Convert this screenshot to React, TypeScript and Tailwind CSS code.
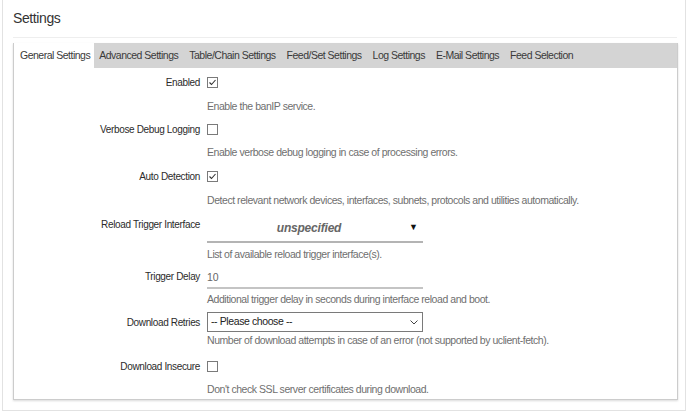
const tabs = [
  'General Settings',
  'Advanced Settings',
  'Table/Chain Settings',
  'Feed/Set Settings',
  'Log Settings',
  'E-Mail Settings',
  'Feed Selection',
]

function Checkbox({ checked }: { checked?: boolean }) {
  return (
    <svg width="11" height="11" viewBox="0 0 11 11" className="block">
      <rect x="0.5" y="0.5" width="10" height="10" fill="#fff" stroke="#7a7a7a" />
      {checked && (
        <polyline points="2.5,5.5 4.5,7.5 8.5,3" fill="none" stroke="#333" strokeWidth="1.1" />
      )}
    </svg>
  )
}

function Label({ children, className = '' }: { children: React.ReactNode; className?: string }) {
  return (
    <div className={`w-[186px] shrink-0 text-right text-[10px] tracking-[-0.35px] text-[#2b2b2b] ${className}`}>
      {children}
    </div>
  )
}

function Desc({ children, className = '' }: { children: React.ReactNode; className?: string }) {
  return (
    <div
      className={`ml-[193px] h-[14px] leading-[14px] text-[10.5px] tracking-[-0.45px] text-[#6f6f6f] ${className}`}
    >
      {children}
    </div>
  )
}

export default function App() {
  return (
    <div className="w-[690px] h-[413px] bg-white overflow-hidden font-['Liberation_Sans',Arial,sans-serif]">
      <div className="ml-[2px] w-[684px] h-[411px] border-x border-b border-[#e2e2e2] pl-[10px]">
        <div className="h-[37px] flex items-center text-[14px] tracking-[-0.4px] text-[#333]">Settings</div>
        <div className="w-[664px] h-px bg-[#eeeeee]" />
        <div className="mt-[5px] w-[665px] border-x border-b border-[#cccccc] shadow-[0_1px_2px_rgba(0,0,0,0.15)]">
          <div className="flex h-[25px] bg-[#d4d4d4] text-[10.5px] tracking-[-0.5px] text-[#3a3a3a]">
            {tabs.map((t, i) => (
              <div
                key={t}
                className={
                  i === 0
                    ? 'flex items-center bg-white pl-[6px] pr-[4px]'
                    : 'flex items-center pl-[5px] pr-[6px]'
                }
              >
                {t}
              </div>
            ))}
          </div>

          <div className="pt-[4px] pb-[3px]">
            {/* Enabled */}
            <div className="flex h-[20px] items-center">
              <Label>Enabled</Label>
              <div className="ml-[7px]"><Checkbox checked /></div>
            </div>
            <Desc className="mt-[7px]">Enable the banIP service.</Desc>

            {/* Verbose */}
            <div className="mt-[6px] flex h-[20px] items-center">
              <Label>Verbose Debug Logging</Label>
              <div className="ml-[7px]"><Checkbox /></div>
            </div>
            <Desc className="mt-[6px]">Enable verbose debug logging in case of processing errors.</Desc>

            {/* Auto detection */}
            <div className="mt-[7px] flex h-[20px] items-center">
              <Label>Auto Detection</Label>
              <div className="ml-[7px]"><Checkbox checked /></div>
            </div>
            <Desc className="mt-[7px]">
              Detect relevant network devices, interfaces, subnets, protocols and utilities automatically.
            </Desc>

            {/* Reload trigger */}
            <div className="mt-[5px] flex">
              <Label className="pt-[3px] leading-[20px]">Reload Trigger Interface</Label>
              <div className="ml-[7px] flex h-[31px] w-[216px] items-center border-b-2 border-[#b4b4b4] pt-[3px]">
                <div className="flex-1 pl-[2px] text-center text-[12px] font-bold italic tracking-[-0.2px] text-[#666]">
                  unspecified
                </div>
                <div className="w-[14px] text-[9px] text-[#111]">▼</div>
              </div>
            </div>
            <Desc className="mt-[4px]">List of available reload trigger interface(s).</Desc>

            {/* Trigger delay */}
            <div className="mt-[6px] flex items-start">
              <Label className="leading-[20px]">Trigger Delay</Label>
              <div className="ml-[7px] h-[22px] w-[216px] border-b-2 border-[#c4c4c4] text-[10.5px] leading-[20px] text-[#666]">
                10
              </div>
            </div>
            <Desc className="mt-[3px]">Additional trigger delay in seconds during interface reload and boot.</Desc>

            {/* Download retries */}
            <div className="mt-[6px] flex h-[20px] items-center">
              <Label>Download Retries</Label>
              <div className="ml-[7px] flex h-[20px] w-[216px] items-center justify-between border border-[#7a7a7a] pl-[3px] pr-[4px] text-[10.5px] tracking-[-0.4px] text-[#222]">
                <span>-- Please choose --</span>
                <svg width="8" height="5" viewBox="0 0 8 5">
                  <polyline points="0.5,0.5 4,4 7.5,0.5" fill="none" stroke="#444" strokeWidth="1" />
                </svg>
              </div>
            </div>
            <Desc className="mt-[1px]">
              Number of download attempts in case of an error (not supported by uclient-fetch).
            </Desc>

            {/* Download insecure */}
            <div className="mt-[9px] flex h-[20px] items-center">
              <Label>Download Insecure</Label>
              <div className="ml-[7px]"><Checkbox /></div>
            </div>
            <Desc className="mt-[6px]">Don't check SSL server certificates during download.</Desc>
          </div>
        </div>
      </div>
    </div>
  )
}
